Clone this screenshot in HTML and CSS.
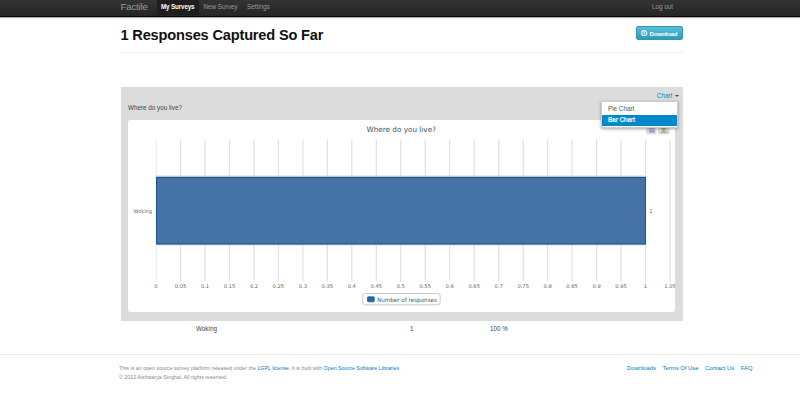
FILE: index.html
```
<!DOCTYPE html>
<html lang="en">
<head>
<meta charset="utf-8">
<title>Factile</title>
<link rel="stylesheet" href="styles.css">
</head>
<body>
<nav class="navbar">
  <div class="container nav-row">
    <a class="brand">Factile</a>
    <a class="nav-link active">My Surveys</a>
    <a class="nav-link survey">New Survey</a>
    <a class="nav-link">Settings</a>
    <a class="logout">Log out</a>
  </div>
</nav>
<main class="container">
  <header class="page-header">
    <h1>1 Responses Captured So Far</h1>
    <a class="download"><svg class="dl-icon" viewBox="0 0 14 14"><circle cx="7" cy="7" r="5.500" fill="none" stroke="#e4f5fa" stroke-width="2.600"/><path d="M6 3.500h2V7h2.200L7 10.300 3.800 7H6z" fill="#e4f5fa"/></svg>Download</a>
  </header>
  <section class="panel">
    <div class="panel-tools">
      <a class="chart-toggle">Chart <span class="caret"></span></a>
      <ul class="menu">
        <li>Pie Chart</li>
        <li class="selected">Bar Chart</li>
      </ul>
    </div>
    <p class="question">Where do you live?</p>
    <svg class="chart" viewBox="128 120 547 192">
      <rect x="128" y="120" width="547" height="192" rx="2.500" fill="#fff"/>
      <path d="M180.500 139.500V281.500M205 139.500V281.500M229.500 139.500V281.500M254 139.500V281.500M278.400 139.500V281.500M302.900 139.500V281.500M327.400 139.500V281.500M351.800 139.500V281.500M376.300 139.500V281.500M400.800 139.500V281.500M425.200 139.500V281.500M449.700 139.500V281.500M474.200 139.500V281.500M498.700 139.500V281.500M523.200 139.500V281.500M547.600 139.500V281.500M572.100 139.500V281.500M596.600 139.500V281.500M621 139.500V281.500M645.500 139.500V281.500M670 139.500V281.500" stroke="#e2e2e2" stroke-width="1.300"/>
      <path d="M156.200 139.500V281.500M154 281.500H156.500" stroke="#dce3ee" stroke-width=".8" fill="none"/>
      <rect x="155.800" y="175.700" width="490.200" height="2" fill="#c6c8cb"/>
      <rect x="156.500" y="244" width="489.500" height="1.200" fill="#b6bfdb"/>
      <rect x="156.500" y="177.500" width="489" height="66.500" fill="#4572a7" stroke="#145792" stroke-width="1"/>
      <text x="366.500" y="132" textLength="69.500" lengthAdjust="spacingAndGlyphs" class="chart-title">Where do you live?</text>
      <text x="133.500" y="213" textLength="18.500" lengthAdjust="spacingAndGlyphs" class="tick">Woking</text>
      <text x="649.300" y="213" class="tick">1</text>
      <g class="tick mid">
        <text x="156" y="288.300">0</text><text x="180.500" y="288.300">0.05</text><text x="205" y="288.300">0.1</text><text x="229.500" y="288.300">0.15</text><text x="254" y="288.300">0.2</text><text x="278.400" y="288.300">0.25</text><text x="302.900" y="288.300">0.3</text><text x="327.400" y="288.300">0.35</text><text x="351.800" y="288.300">0.4</text><text x="376.300" y="288.300">0.45</text><text x="400.800" y="288.300">0.5</text><text x="425.200" y="288.300">0.55</text><text x="449.700" y="288.300">0.6</text><text x="474.200" y="288.300">0.65</text><text x="498.700" y="288.300">0.7</text><text x="523.200" y="288.300">0.75</text><text x="547.600" y="288.300">0.8</text><text x="572.100" y="288.300">0.85</text><text x="596.600" y="288.300">0.9</text><text x="621" y="288.300">0.95</text><text x="645.500" y="288.300">1</text><text x="670" y="288.300">1.05</text>
      </g>
      <rect x="362.800" y="293.500" width="77.400" height="11.300" rx="2.500" fill="#fff" stroke="#c4c4c4" stroke-width=".9"/>
      <rect x="367.500" y="296.800" width="6.800" height="5" rx=".7" fill="#2865a5" stroke="#145792" stroke-width=".7"/>
      <text x="377" y="301.900" textLength="60" lengthAdjust="spacingAndGlyphs" class="legend">Number of responses</text>
      <rect x="646" y="124" width="10.500" height="10.500" rx="2" fill="#dedede"/>
      <rect x="658" y="124" width="11.500" height="10.500" rx="2" fill="#dedede"/>
      <path d="M649 127h5.500v5.500H649z" fill="#a5b9d0"/><path d="M649 131.800h5.500" stroke="#8499b2"/>
      <path d="M663.700 126l3 3.500h-2v2h-2v-2h-2z" fill="#a1ac7b"/><path d="M660.800 132.200h6" stroke="#8c9573"/>
    </svg>
  </section>
  <div class="results"><span>Woking</span><span>1</span><span>100 %</span></div>
</main>
<footer class="footer">
  <div class="container footer-row">
    <div class="about">
      <p class="license">This is an open source survey platform released under the <a>LGPL license</a>. It is built with <a>Open Source Software Libraries</a>.</p>
      <p class="copyright">© 2012 Aishwarya Singhal. All rights reserved.</p>
    </div>
    <div class="links"><a>Downloads</a><a>Terms Of Use</a><a>Contact Us</a><a>FAQ</a></div>
  </div>
</footer>
</body>
</html>
```
FILE: styles.css
```
* { box-sizing: border-box; }
body { margin: 0; height: 407px; overflow: hidden; background: #fff; color: #444; font: 6.300px/9px "Liberation Sans", Arial, sans-serif; }
p, h1, ul { margin: 0; padding: 0; }
.container { width: 562px; margin-left: 120.500px; }
.navbar { height: 16.500px; background: linear-gradient(#333, #252525); border-bottom: 1px solid #060606; box-shadow: 0 1px 1px #aaa; }
.nav-row { display: flex; height: 15px; align-items: stretch; line-height: 13px; color: #999; }
.brand { width: 36px; font-size: 9.700px; letter-spacing: -.18px; }
.nav-link { padding: 0 4.600px; letter-spacing: -.02px; }
.nav-link.active { width: 42.500px; padding-left: 4.500px; background: #1e1e1e; color: #fff; font-weight: bold; letter-spacing: -.16px; white-space: nowrap; }
.nav-link.survey { width: 43.500px; white-space: nowrap; }
.logout { margin-left: auto; margin-right: 9.500px; }
.page-header { display: flex; justify-content: space-between; align-items: flex-start; height: 36px; padding-top: 9.500px; border-bottom: 1px solid #f2f2f2; }
h1 { color: #111; font-size: 14.600px; line-height: 19px; letter-spacing: -.18px; white-space: nowrap; }
.download { display: flex; align-items: center; width: 47px; height: 14px; padding-left: 4.500px; gap: 2px; border: 1px solid #3597ae; border-radius: 2px; background: linear-gradient(#58bedb, #309bb7); color: #fff; font-weight: bold; font-size: 6.200px; letter-spacing: -.22px; }
.dl-icon { width: 6.500px; height: 6.500px; flex: none; }
.panel { height: 234px; margin-top: 34.500px; padding: 4px 7.500px 0; background: #dcdcdc; position: relative; }
.panel-tools { text-align: right; height: 12px; }
.chart-toggle { color: #08c; }
.caret { display: inline-block; margin: 0 -4px 1px 1px; border: 2px solid transparent; border-top-color: #444; border-bottom: 0; width: 0; vertical-align: baseline; }
.menu { position: absolute; z-index: 2; top: 14px; right: 4.500px; width: 77.500px; height: 26.500px; padding-top: 1.500px; background: #fff; border: .5px solid #ccc; box-shadow: 0 1px 3px rgba(0,0,0,.35); list-style: none; text-align: left; }
.menu li { height: 11px; line-height: 10px; padding-left: 6.500px; color: #555; }
.menu li.selected { background: #0088cc; color: #fff; font-weight: bold; letter-spacing: -.2px; }
.question { height: 17px; line-height: 9px; }
.chart { display: block; width: 547px; height: 192px; }
.chart text { font-family: "DejaVu Sans", sans-serif; fill: #666; }
.chart .chart-title { font-size: 7.400px; fill: #3e576f; }
.chart .tick, .chart .tick text { font-size: 5.200px; }
.chart .mid { text-anchor: middle; }
.chart .legend { font-size: 5.900px; fill: #3e576f; }
.results { display: grid; grid-template-columns: 214px 80px 1fr; height: 33px; padding: 3px 0 0 75.500px; }
.footer { border-top: 1px solid #e8e8e8; padding-top: 9px; }
.footer-row { display: flex; justify-content: space-between; }
.about { color: #888; font-size: 5.300px; margin-left: -1.500px; }
.license { letter-spacing: .005px; }
.about p { white-space: nowrap; height: 9px; }
.footer a { color: #0878c4; }
.links { display: flex; gap: 6.500px; margin-right: -70px; font-size: 5.900px; }
```
